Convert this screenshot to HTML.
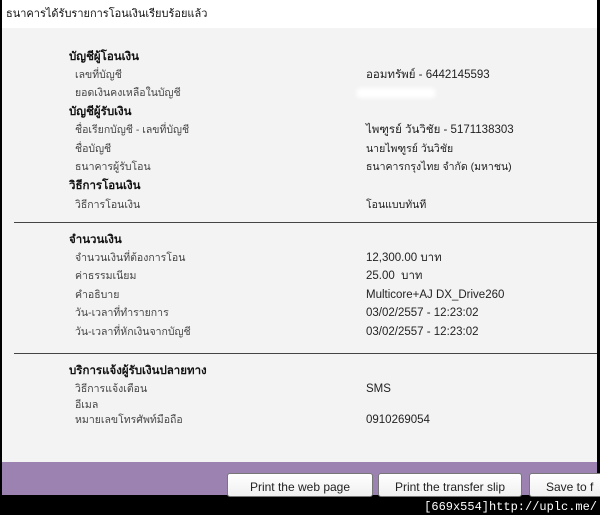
<!DOCTYPE html>
<html><head><meta charset="utf-8"><style>
body{margin:0;width:600px;height:515px;overflow:hidden;background:#000;position:relative;font-family:"Liberation Sans","Noto Sans CJK SC",sans-serif;color:#222}
#w{position:absolute;left:2px;top:0;width:595px;height:495px;background:#f3f3f3}
#t{position:absolute;left:0;top:0;width:595px;height:28px;background:#fff;font-size:11px;line-height:28px;padding-left:4px;box-sizing:border-box;color:#111}
.h,.l,.v{line-height:14px;height:14px;white-space:nowrap}
.h{position:absolute;left:67px;font-size:11.5px;font-weight:bold;color:#111}
.l{position:absolute;left:73px;font-size:10.5px;color:#444}
.v{position:absolute;left:364px;font-size:11.5px;color:#222}
.hr{position:absolute;left:12px;width:583px;height:1px;background:#444}
#p{position:absolute;left:0;top:462px;width:595px;height:33px;background:#9c82b1}
.b{position:absolute;top:473px;height:24px;background:linear-gradient(#fff,#f0f0f0);border:1px solid #777;border-radius:3px;font-size:12px;text-align:center;line-height:26px;box-sizing:border-box;color:#222}
#f{position:absolute;right:3px;bottom:1px;color:#fff;font-size:12px;font-family:"Liberation Mono",monospace}
</style></head><body>
<div id="w">
<div id="t">ธนาคารได้รับรายการโอนเงินเรียบร้อยแล้ว</div>
<div class="h" style="top:50px">บัญชีผู้โอนเงิน</div>
<div class="l" style="top:68px">เลขที่บัญชี</div><div class="v" style="top:68px">ออมทรัพย์ - 6442145593</div>
<div class="l" style="top:86px">ยอดเงินคงเหลือในบัญชี</div>
<div style="position:absolute;left:354px;top:88px;width:80px;height:10px;background:#fff;border-radius:5px;filter:blur(2px)"></div>
<div class="h" style="top:105px">บัญชีผู้รับเงิน</div>
<div class="l" style="top:123px">ชื่อเรียกบัญชี - เลขที่บัญชี</div><div class="v" style="top:123px">ไพฑูรย์ วันวิชัย - 5171138303</div>
<div class="l" style="top:142px">ชื่อบัญชี</div><div class="v" style="top:142px;font-size:10.5px">นายไพฑูรย์ วันวิชัย</div>
<div class="l" style="top:160px">ธนาคารผู้รับโอน</div><div class="v" style="top:160px;font-size:10.5px">ธนาคารกรุงไทย จำกัด (มหาชน)</div>
<div class="h" style="top:179px">วิธีการโอนเงิน</div>
<div class="l" style="top:198px">วิธีการโอนเงิน</div><div class="v" style="top:198px;font-size:10.5px">โอนแบบทันที</div>
<div class="hr" style="top:222px"></div>
<div class="h" style="top:233px">จำนวนเงิน</div>
<div class="l" style="top:251px">จำนวนเงินที่ต้องการโอน</div><div class="v" style="top:251px">12,300.00 บาท</div>
<div class="l" style="top:269px">ค่าธรรมเนียม</div><div class="v" style="top:269px">25.00 &nbsp;บาท</div>
<div class="l" style="top:288px">คำอธิบาย</div><div class="v" style="top:288px">Multicore+AJ DX_Drive260</div>
<div class="l" style="top:306px">วัน-เวลาที่ทำรายการ</div><div class="v" style="top:306px">03/02/2557 - 12:23:02</div>
<div class="l" style="top:325px">วัน-เวลาที่หักเงินจากบัญชี</div><div class="v" style="top:325px">03/02/2557 - 12:23:02</div>
<div class="hr" style="top:353px"></div>
<div class="h" style="top:364px">บริการแจ้งผู้รับเงินปลายทาง</div>
<div class="l" style="top:382px">วิธีการแจ้งเตือน</div><div class="v" style="top:382px">SMS</div>
<div class="l" style="top:398px">อีเมล</div>
<div class="l" style="top:413px">หมายเลขโทรศัพท์มือถือ</div><div class="v" style="top:413px">0910269054</div>
<div id="p"></div>
<div class="b" style="left:225px;width:146px">Print the web page</div>
<div class="b" style="left:376px;width:144px">Print the transfer slip</div>
<div class="b" style="left:527px;width:80px;text-align:left;padding-left:16px">Save to f</div>
</div>
<div id="f">[669x554]http://uplc.me/</div>
</body></html>
